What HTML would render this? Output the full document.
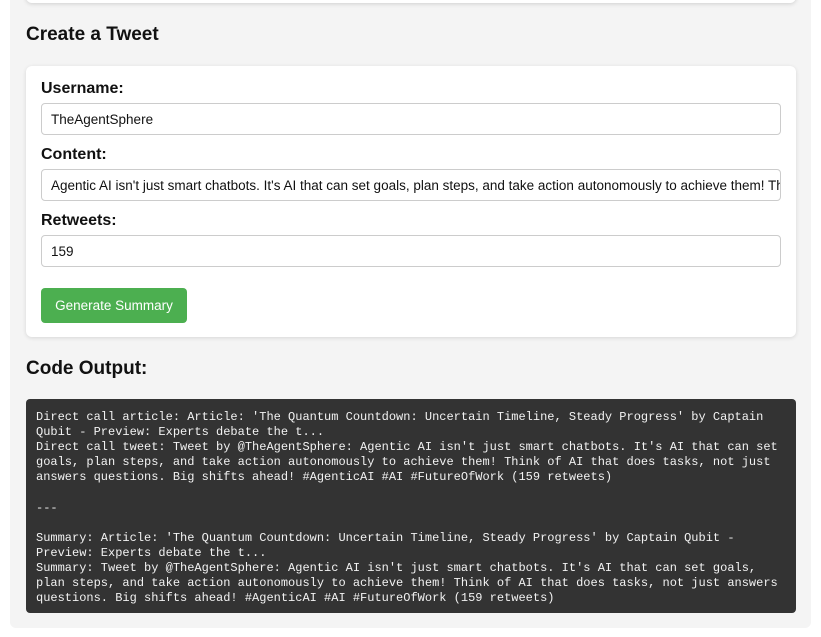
<!DOCTYPE html>
<html><head><meta charset="utf-8"><style>
body{margin:0;background:#fff;font-family:"Liberation Sans",Arial,sans-serif;width:821px;height:637px;overflow:hidden;position:relative}
.panel{position:absolute;left:10px;top:-10px;width:801px;height:638px;background:#f4f4f4;border-radius:0 0 6px 6px}
.topcard{position:absolute;left:26px;top:-10px;width:770px;height:13px;background:#fff;border-radius:6px;box-shadow:0 1px 4px rgba(0,0,0,.15)}
h2{position:absolute;left:26px;margin:0;font-size:19px;font-weight:bold;color:#111}
.card{position:absolute;left:26px;top:66px;width:770px;height:271px;background:#fff;border-radius:6px;box-shadow:0 1px 4px rgba(0,0,0,.12)}
.lbl{position:absolute;left:15px;font-size:16px;font-weight:bold;color:#111}
.inp{position:absolute;left:15px;height:30px;border:1px solid #ccc;border-radius:4px;padding:0 0 0 9px;font-size:13.5px;line-height:32px;color:#111;white-space:nowrap;overflow:hidden;width:729px}
.btn{position:absolute;left:15px;top:222px;width:146px;height:35px;background:#4caf50;border-radius:4px;color:#fff;font-size:13.5px;text-align:center;line-height:35px}
pre{position:absolute;left:26px;top:399px;width:750px;height:193px;margin:0;padding:11px 10px 10px;background:#333;color:#f2f2f2;border-radius:4px;font-family:"Liberation Mono","DejaVu Sans Mono",monospace;font-size:12px;line-height:15.1px;white-space:pre}
</style></head><body>
<div class="panel"></div>
<div class="topcard"></div>
<h2 style="top:24px">Create a Tweet</h2>
<div class="card">
<div class="lbl" style="top:14px">Username:</div>
<div class="inp" style="top:37px">TheAgentSphere</div>
<div class="lbl" style="top:80px">Content:</div>
<div class="inp" style="top:103px">Agentic AI isn't just smart chatbots. It's AI that can set goals, plan steps, and take action autonomously to achieve them! Think of AI that does tasks</div>
<div class="lbl" style="top:146px">Retweets:</div>
<div class="inp" style="top:169px">159</div>
<div class="btn">Generate Summary</div>
</div>
<h2 style="top:358px">Code Output:</h2>
<pre>Direct call article: Article: 'The Quantum Countdown: Uncertain Timeline, Steady Progress' by Captain
Qubit - Preview: Experts debate the t...
Direct call tweet: Tweet by @TheAgentSphere: Agentic AI isn't just smart chatbots. It's AI that can set
goals, plan steps, and take action autonomously to achieve them! Think of AI that does tasks, not just
answers questions. Big shifts ahead! #AgenticAI #AI #FutureOfWork (159 retweets)

---

Summary: Article: 'The Quantum Countdown: Uncertain Timeline, Steady Progress' by Captain Qubit -
Preview: Experts debate the t...
Summary: Tweet by @TheAgentSphere: Agentic AI isn't just smart chatbots. It's AI that can set goals,
plan steps, and take action autonomously to achieve them! Think of AI that does tasks, not just answers
questions. Big shifts ahead! #AgenticAI #AI #FutureOfWork (159 retweets)</pre>
</body></html>
